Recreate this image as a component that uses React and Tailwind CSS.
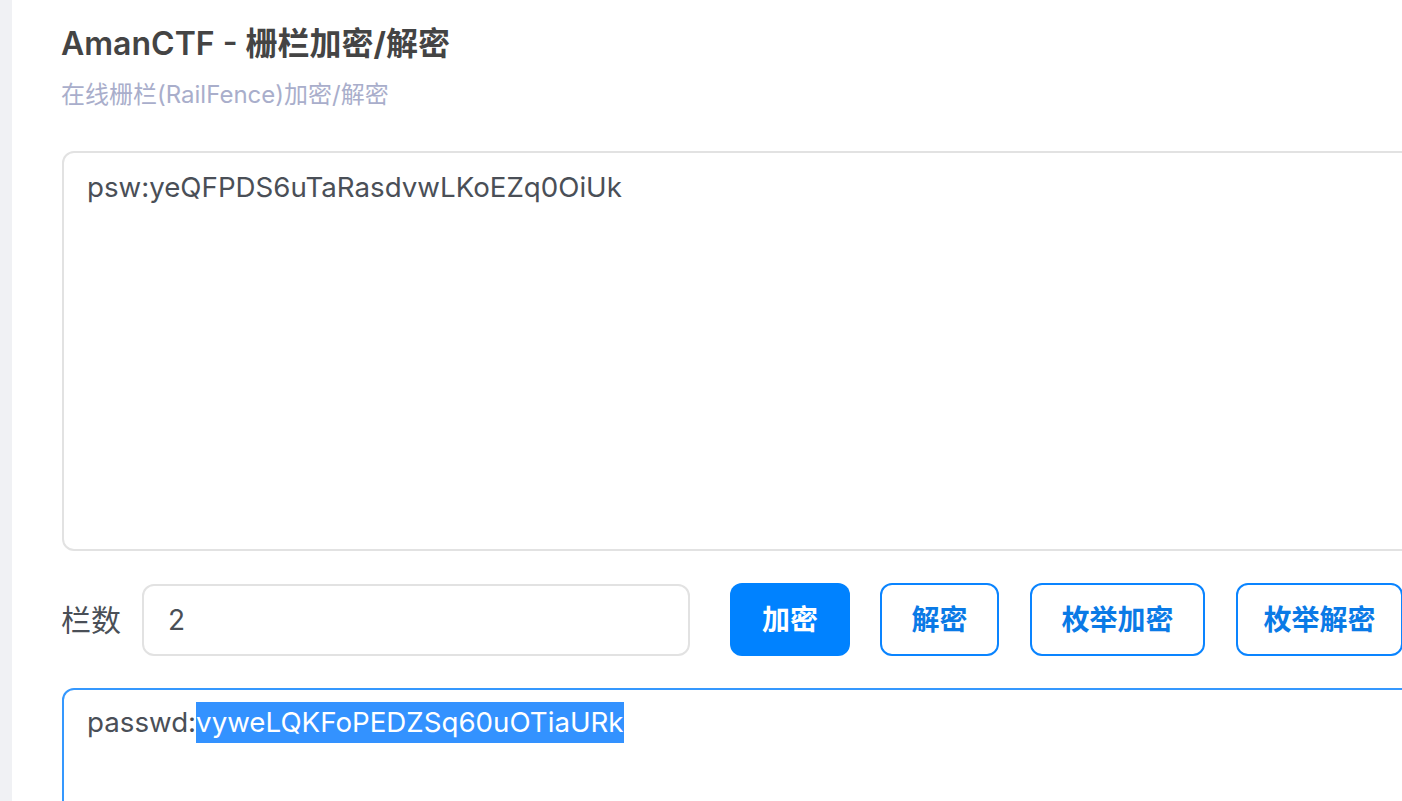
import React from "react";

const font = { fontFamily: 'Inter, "Noto Sans CJK SC", sans-serif' };

export default function App() {
  return (
    <div
      className="w-[1402px] h-[801px] overflow-hidden flex bg-white"
      style={font}
    >
      <div className="w-[12px] shrink-0 bg-[#f0f1f4]" />
      <div className="shrink-0 w-[1420px] pl-[49px] pt-[24px]">
        <h1 className="text-[32px] leading-[40px] font-semibold text-[#444444]">
          AmanCTF - <span className="font-bold">栅栏加密/解密</span>
        </h1>
        <p className="mt-[15px] text-[24px] leading-[32px] text-[#a9aecb]">
          在线栅栏(RailFence)加密/解密
        </p>
        <div className="mt-[40px] ml-[1px] h-[400px] w-[1380px] rounded-[12px] border-2 border-[#e2e2e2] pl-[23px] pr-[24px] pt-[14px] text-[27.7px] leading-[41px] text-[#4a4f57]">
          psw:yeQFPDS6uTaRasdvwLKoEZq0OiUk
        </div>
        <div className="mt-[32px] flex items-center">
          <span className="text-[30px] text-[#4a4f57] leading-[40px]">栏数</span>
          <div className="ml-[21px] h-[72px] w-[548px] rounded-[12px] border-2 border-[#e2e2e2] flex items-center px-[24px] text-[28px] text-[#4a4f57]">
            2
          </div>
          <button className="ml-[40px] h-[73px] w-[120px] rounded-[12px] bg-[#0082ff] text-white text-[28px] font-bold">
            加密
          </button>
          <button className="ml-[30px] h-[73px] w-[119px] rounded-[12px] border-2 border-[#0a84ff] text-[#0a7ae6] text-[28px] font-bold">
            解密
          </button>
          <button className="ml-[31px] h-[73px] w-[175px] rounded-[12px] border-2 border-[#0a84ff] text-[#0a7ae6] text-[28px] font-bold">
            枚举加密
          </button>
          <button className="ml-[31px] h-[73px] w-[167px] rounded-[12px] border-2 border-[#0a84ff] text-[#0a7ae6] text-[28px] font-bold">
            枚举解密
          </button>
        </div>
        <div className="mt-[32px] ml-[1px] h-[300px] w-[1380px] rounded-[12px] border-2 border-[#3598fe] pl-[23px] pr-[24px] pt-[12px] text-[27.7px] leading-[41px] text-[#4a4f57]">
          passwd:<span className="inline-block bg-[#3392ff] text-white">vyweLQKFoPEDZSq60uOTiaURk</span>
        </div>
      </div>
    </div>
  );
}
